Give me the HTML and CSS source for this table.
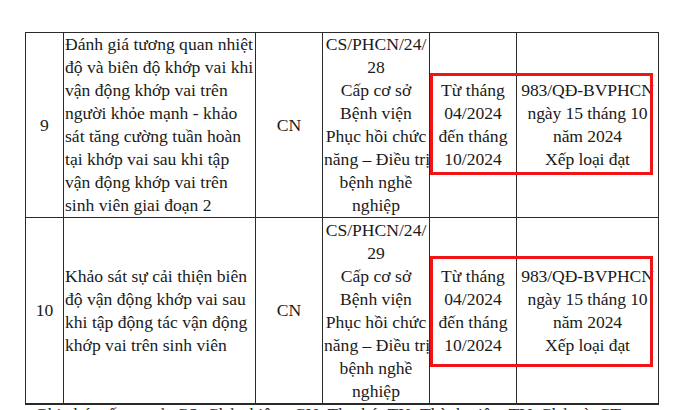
FILE: index.html
```html
<!DOCTYPE html>
<html lang="vi">
<head>
<meta charset="utf-8">
<link rel="stylesheet" href="styles.css">
</head>
<body>
<div class="page">
  <div class="table-wrap">
    <table class="grid">
      <colgroup>
        <col class="c-no"><col class="c-title"><col class="c-role"><col class="c-code"><col class="c-time"><col class="c-result">
      </colgroup>
      <tr class="row1">
        <td class="center">9</td>
        <td class="left">Đánh giá tương quan nhiệt<br>độ và biên độ khớp vai khi<br>vận động khớp vai trên<br>người khỏe mạnh - khảo<br>sát tăng cường tuần hoàn<br>tại khớp vai sau khi tập<br>vận động khớp vai trên<br>sinh viên giai đoạn 2</td>
        <td class="center">CN</td>
        <td class="center">CS/PHCN/24/<br>28<br>Cấp cơ sở<br>Bệnh viện<br>Phục hồi chức<br>năng – Điều trị<br>bệnh nghề<br>nghiệp</td>
        <td class="center">Từ tháng<br>04/2024<br>đến tháng<br>10/2024</td>
        <td class="center tight">983/QĐ-BVPHCN<br>ngày 15 tháng 10<br>năm 2024<br>Xếp loại đạt</td>
      </tr>
      <tr class="row2">
        <td class="center">10</td>
        <td class="left">Khảo sát sự cải thiện biên<br>độ vận động khớp vai sau<br>khi tập động tác vận động<br>khớp vai trên sinh viên</td>
        <td class="center">CN</td>
        <td class="center">CS/PHCN/24/<br>29<br>Cấp cơ sở<br>Bệnh viện<br>Phục hồi chức<br>năng – Điều trị<br>bệnh nghề<br>nghiệp</td>
        <td class="center">Từ tháng<br>04/2024<br>đến tháng<br>10/2024</td>
        <td class="center tight">983/QĐ-BVPHCN<br>ngày 15 tháng 10<br>năm 2024<br>Xếp loại đạt</td>
      </tr>
    </table>
    <div class="mark mark1"></div>
    <div class="mark mark2"></div>
  </div>
  <p class="note">Ghi chú: cấp cơ sở: CS; Chủ nhiệm: CN; Thư ký: TK; Thành viên: TV; Chủ trì: CT</p>
</div>
</body>
</html>
```
FILE: styles.css
```css
html, body {
  margin: 0;
  padding: 0;
  background: #ffffff;
}
body {
  font-family: "Liberation Serif", "Times New Roman", "Tinos", serif;
  font-size: 17.6px;
  color: #1a1a1a;
  width: 700px;
  height: 410px;
  overflow: hidden;
}
.page {
  padding: 32px 0 0 25px;
}
.table-wrap {
  position: relative;
  width: 633px;
}
.grid {
  border-collapse: collapse;
  table-layout: fixed;
  width: 633px;
  line-height: 23px;
  font-family: "Liberation Serif", "Times New Roman", serif;
  font-size: 17.6px;
}
.c-no { width: 38px; }
.c-title { width: 192px; }
.c-role { width: 67px; }
.c-code { width: 107px; }
.c-time { width: 87px; }
.c-result { width: 142px; }
.grid td {
  border: 1px solid #2a2a2a;
  padding: 0 1px;
  vertical-align: middle;
  white-space: nowrap;
  overflow: visible;
  font-family: "Liberation Serif", serif;
}
.row1 td { height: 184px; }
.row2 td { height: 185px; }
.grid tr.row2 td { border-bottom-width: 2px; }
.center { text-align: center; }
.left { text-align: left; }
.tight { letter-spacing: -0.1px; }
.mark {
  position: absolute;
  border: 3px solid #f01414;
  box-sizing: border-box;
}
.mark1 {
  left: 405px;
  top: 41px;
  width: 223px;
  height: 102px;
}
.mark2 {
  left: 405px;
  top: 224px;
  width: 223px;
  height: 111px;
}
.note {
  margin: 0 0 0 10px;
  line-height: 18px;
  white-space: nowrap;
  color: #2a2a2a;
  font-family: "Liberation Serif", serif;
}
```
